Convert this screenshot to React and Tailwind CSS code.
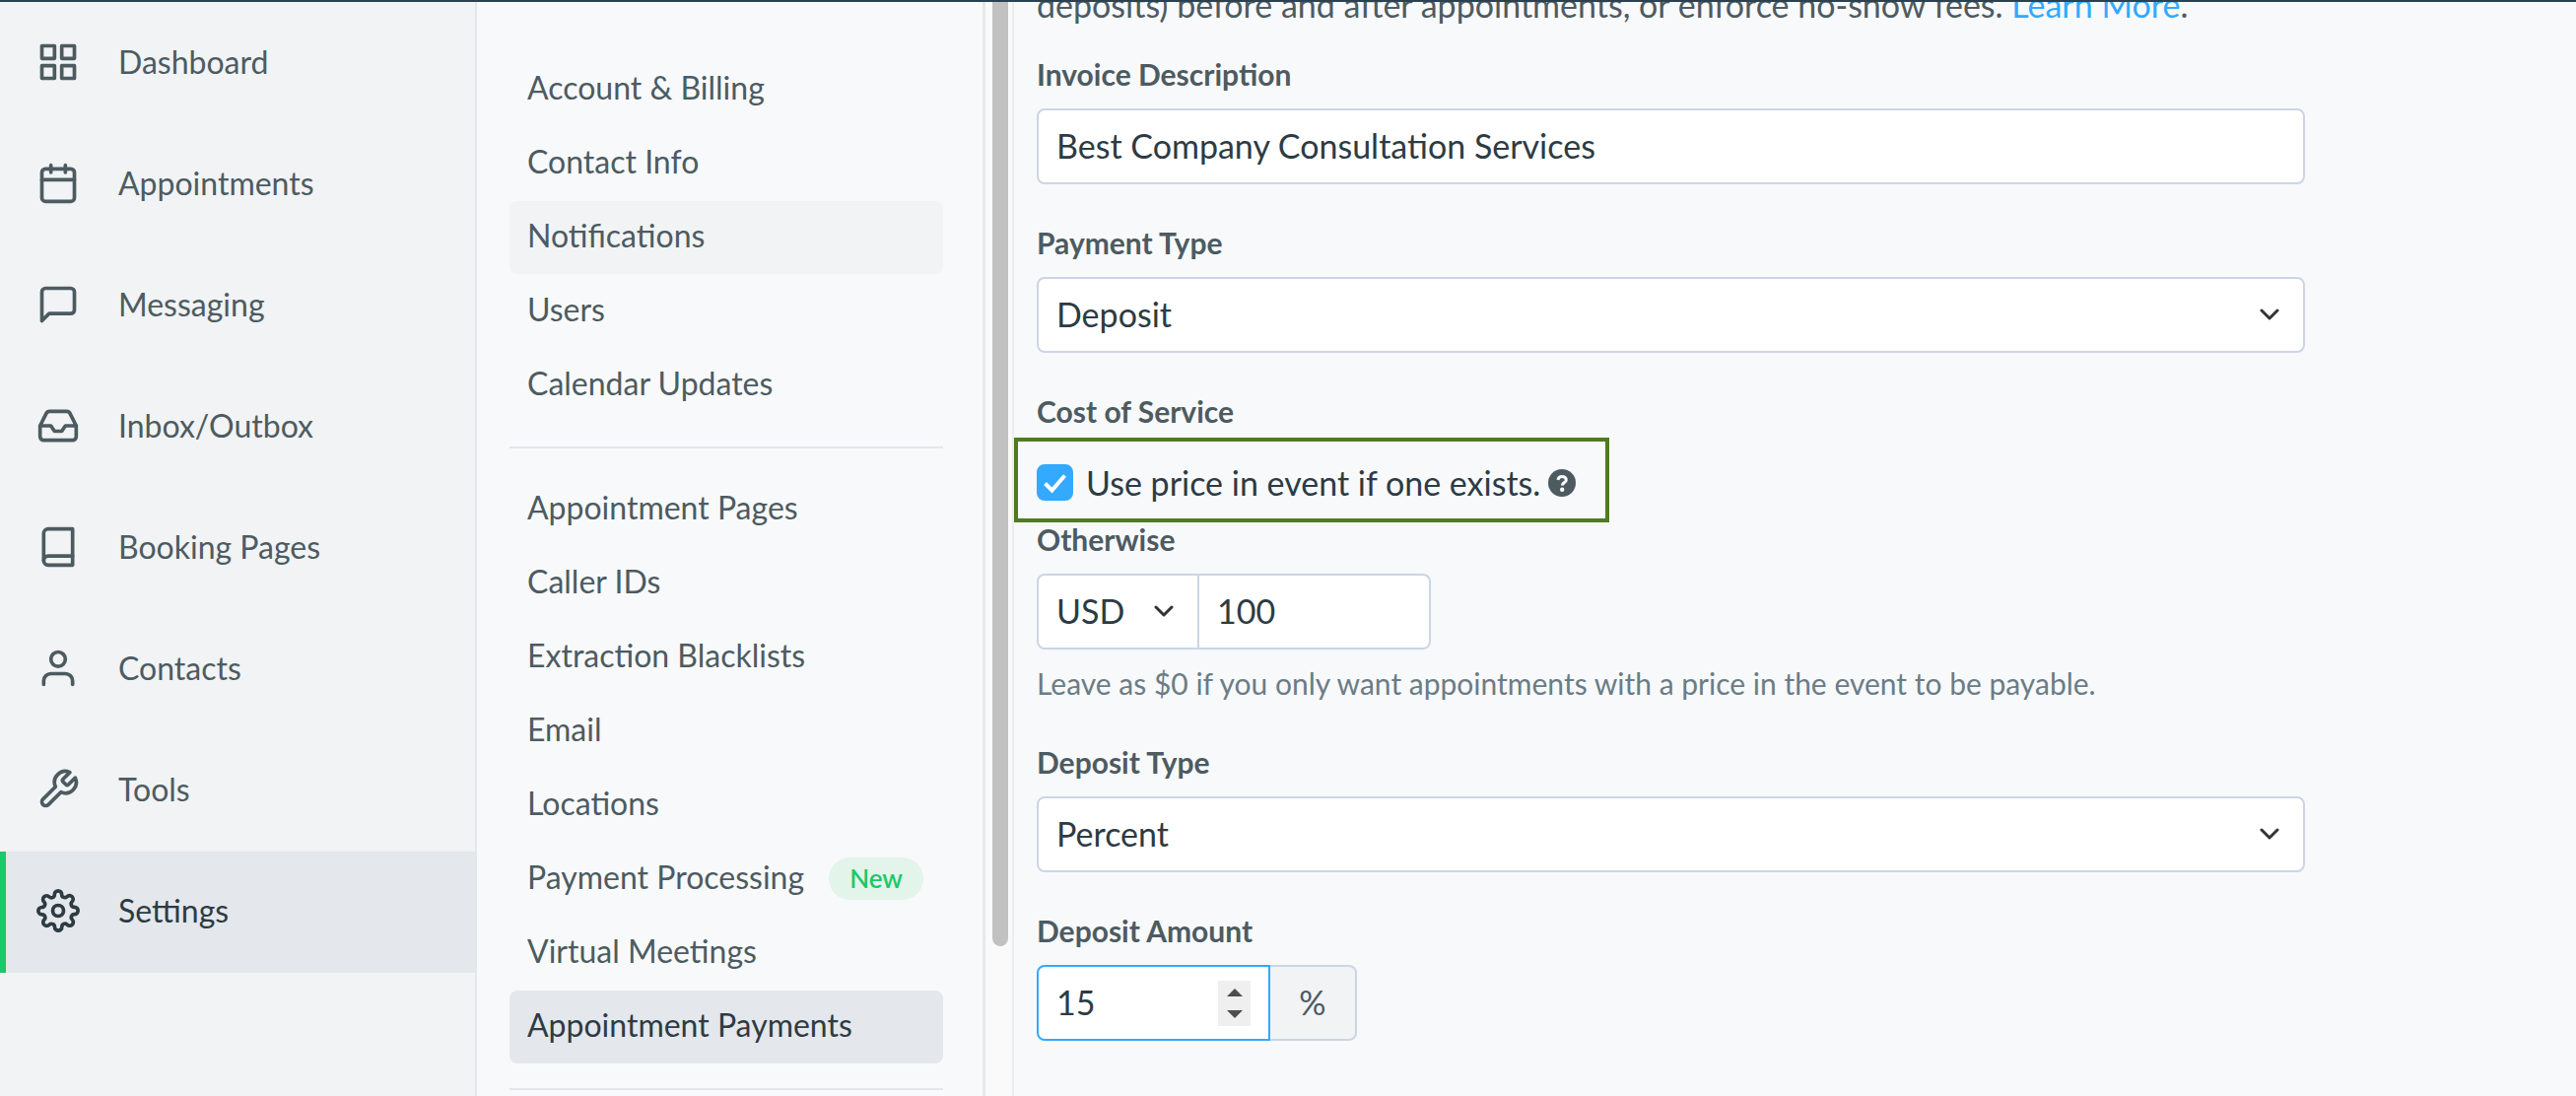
import React from "react";
import clsx from "clsx";
import {
  FiGrid,
  FiCalendar,
  FiMessageSquare,
  FiInbox,
  FiBook,
  FiUser,
  FiTool,
  FiSettings,
} from "react-icons/fi";

const mainLinks = [
  { name: "Dashboard", icon: FiGrid },
  { name: "Appointments", icon: FiCalendar },
  { name: "Messaging", icon: FiMessageSquare },
  { name: "Inbox/Outbox", icon: FiInbox },
  { name: "Booking Pages", icon: FiBook },
  { name: "Contacts", icon: FiUser },
  { name: "Tools", icon: FiTool },
  { name: "Settings", icon: FiSettings },
];

const settingsGroups = [
  ["Account & Billing", "Contact Info", "Notifications", "Users", "Calendar Updates"],
  [
    "Appointment Pages",
    "Caller IDs",
    "Extraction Blacklists",
    "Email",
    "Locations",
    "Payment Processing",
    "Virtual Meetings",
    "Appointment Payments",
  ],
];

const SideNav = ({ active }) => (
  <nav className="w-[484px] shrink-0 bg-[#f1f3f4] border-r-2 border-[#e4e7ea] pt-px">
    {mainLinks.map(({ name, icon: Icon }) => (
      <a
        key={name}
        href="#"
        className={clsx(
          "flex items-center h-[123px] gap-[39px] pl-[31px] pb-[3px] border-l-6 text-[32px]",
          name === active
            ? "border-[#1cc869] bg-[#e4e7ec] text-[#2d3b43]"
            : "border-transparent text-[#4d5b61]"
        )}
      >
        <Icon size={44} />
        {name}
      </a>
    ))}
  </nav>
);

const SettingsNav = ({ active, hovered }) => (
  <nav className="w-[516px] shrink-0 overflow-hidden border-r-3 border-[#e6e8ea] pt-[52px] pl-[33px] pr-[40px]">
    {settingsGroups.map((group, i) => (
      <div key={i}>
        <ul className="flex flex-col gap-px">
          {group.map((name) => (
            <li key={name}>
              <a
                href="#"
                className={clsx(
                  "flex items-center h-[74px] px-[18px] pb-[5px] rounded-lg text-[32px] whitespace-nowrap",
                  name === active && "bg-[#e4e7ec] text-[#2d3b43]",
                  name === hovered && "bg-[#f1f3f4]"
                )}
              >
                {name}
                {name === "Payment Processing" && (
                  <span className="ml-auto mr-[2px] mt-1 px-[21px] rounded-full bg-[#e3f4ea] text-[26px] leading-[43px] font-semibold text-[#1cc869]">
                    New
                  </span>
                )}
              </a>
            </li>
          ))}
        </ul>
        <hr className="my-[25px] border-t-2 border-[#e4e7ea]" />
      </div>
    ))}
  </nav>
);

const ScrollTrack = () => (
  <div className="w-[29px] shrink-0 pl-[7px] bg-[#fafafa] border-r-2 border-[#ececec]">
    <div className="w-4 h-[958px] rounded-b-full bg-[#c1c1c1]"></div>
  </div>
);

const FieldLabel = ({ htmlFor, children }) => (
  <label htmlFor={htmlFor} className="block w-fit mb-[15px] text-[30px] leading-10 font-bold">
    {children}
  </label>
);

const Select = ({ id, value, label, className }) => (
  <div className={clsx("relative h-[77px]", className)}>
    <select
      id={id}
      defaultValue={value}
      aria-label={label}
      className="appearance-none size-full pl-[18px] pb-[3px] bg-white border-2 border-[#cbd5e5] rounded-[inherit] text-[34px] text-[#2d3b43]"
    >
      <option>{value}</option>
    </select>
    <svg
      viewBox="0 0 20 12"
      className="absolute right-[26px] top-[32px] w-5 h-3 pointer-events-none"
      fill="none"
      stroke="#333333"
      strokeWidth="3"
      strokeLinecap="round"
      strokeLinejoin="round"
    >
      <path d="M2 2l8 8 8-8" />
    </svg>
  </div>
);

const PaymentForm = () => {
  const [amount, setAmount] = React.useState(15);
  const [useEventPrice, setUseEventPrice] = React.useState(true);

  return (
    <form className="pl-[23px] max-w-[1310px]">
      <p className="-mt-[21px] mb-[26px] text-[34px] leading-12 whitespace-nowrap">
        deposits) before and after appointments, or enforce no-show fees.{" "}
        <a href="#" className="text-[#33a9ff]">
          Learn More
        </a>
        .
      </p>

      <div className="mb-[39px]">
        <FieldLabel htmlFor="description">Invoice Description</FieldLabel>
        <input
          id="description"
          type="text"
          defaultValue="Best Company Consultation Services"
          className="block w-full h-[77px] px-[18px] pb-[3px] bg-white border-2 border-[#cbd5e5] rounded-lg text-[34px] text-[#2d3b43]"
        />
      </div>

      <div className="mb-[39px]">
        <FieldLabel htmlFor="paymentType">Payment Type</FieldLabel>
        <Select id="paymentType" value="Deposit" className="rounded-lg" />
      </div>

      <div className="mb-[39px]">
        <FieldLabel htmlFor="useEventPrice">Cost of Service</FieldLabel>
        <div className="relative flex items-center h-[75px]">
          <div className="absolute -left-[23px] -top-2 -bottom-[3px] w-[604px] border-4 border-[#4f7b22] pointer-events-none"></div>
          <span className="relative size-[37px]">
            <input
              id="useEventPrice"
              type="checkbox"
              checked={useEventPrice}
              onChange={() => setUseEventPrice(!useEventPrice)}
              className="appearance-none block size-full rounded-lg bg-white border-2 border-[#cbd5e5] checked:bg-[#33a9ff] checked:border-[#33a9ff]"
            />
            {useEventPrice && (
              <svg
                viewBox="0 0 37 37"
                className="absolute inset-0 pointer-events-none"
                fill="none"
                stroke="white"
                strokeWidth="4"
              >
                <path d="M8.500 19.500l7 7L28.500 11.500" />
              </svg>
            )}
          </span>
          <label htmlFor="useEventPrice" className="ml-[13px] text-[34px] text-[#2d3b43]">
            Use price in event if one exists.
          </label>
          <button type="button" aria-label="Help" className="ml-2">
            <svg viewBox="0 0 28 28" className="size-7" fill="none">
              <circle cx="14" cy="14" r="14" fill="#4d5b61" />
              <path
                d="M9.800 10.800c.6-2.200 2.200-3.300 4.300-3.300 2.400 0 4.200 1.400 4.200 3.400 0 2.700-3.900 2.700-3.900 5.600"
                stroke="white"
                strokeWidth="3"
              />
              <circle cx="14.200" cy="20.800" r="2.200" fill="white" />
            </svg>
          </button>
        </div>

        <FieldLabel htmlFor="cost">Otherwise</FieldLabel>
        <div className="flex">
          <Select
            id="currency"
            value="USD"
            label="Currency"
            className="w-[165px] rounded-l-lg"
          />
          <input
            id="cost"
            type="text"
            defaultValue="100"
            className="w-[237px] -ml-[2px] h-[77px] px-[18px] pb-[3px] bg-white border-2 border-[#cbd5e5] rounded-r-lg text-[34px] text-[#2d3b43]"
          />
        </div>
        <p className="mt-[14px] mb-10 text-[30px] leading-10 text-[#6b7c85]">
          Leave as $0 if you only want appointments with a price in the event to be payable.
        </p>
      </div>

      <div className="mb-[39px]">
        <FieldLabel htmlFor="depositType">Deposit Type</FieldLabel>
        <Select id="depositType" value="Percent" className="rounded-lg" />
      </div>

      <FieldLabel htmlFor="depositAmount">Deposit Amount</FieldLabel>
      <div className="flex h-[77px] text-[34px]">
        <div className="flex items-center w-[237px] pr-[18px] bg-white border-2 border-[#33a9ff] rounded-l-lg">
          <input
            id="depositAmount"
            type="text"
            inputMode="numeric"
            value={amount}
            onChange={(e) => setAmount(Number(e.target.value) || 0)}
            className="flex-1 min-w-0 h-full pl-[18px] pb-[3px] text-[#2d3b43] outline-none"
          />
          <div className="flex flex-col w-[33px] h-[46px] bg-[#efefef]">
            <button
              type="button"
              aria-label="Increase"
              onClick={() => setAmount(amount + 1)}
              className="flex-1 flex items-end justify-center pb-[7px]"
            >
              <svg viewBox="0 0 16 8" className="w-4 h-2" fill="#4d4d4d">
                <path d="M8 0l8 8H0z" />
              </svg>
            </button>
            <button
              type="button"
              aria-label="Decrease"
              onClick={() => setAmount(amount - 1)}
              className="flex-1 flex items-start justify-center pt-[7px]"
            >
              <svg viewBox="0 0 16 8" className="w-4 h-2" fill="#4d4d4d">
                <path d="M8 8l8-8H0z" />
              </svg>
            </button>
          </div>
        </div>
        <span className="flex items-center justify-center w-[88px] pb-[3px] bg-[#f1f3f5] border-2 border-l-0 border-[#cbd5e5] rounded-r-lg">
          %
        </span>
      </div>
    </form>
  );
};

const App = () => {
  return (
    <div className="h-screen flex overflow-hidden border-t-2 border-[#2c4150] bg-[#f8f9fb] font-['Lato',sans-serif] text-[#4d5b61]">
      <SideNav active="Settings" />
      <SettingsNav active="Appointment Payments" hovered="Notifications" />
      <ScrollTrack />
      <main className="flex-1 min-w-0 overflow-hidden">
        <PaymentForm />
      </main>
    </div>
  );
};

export default App;
